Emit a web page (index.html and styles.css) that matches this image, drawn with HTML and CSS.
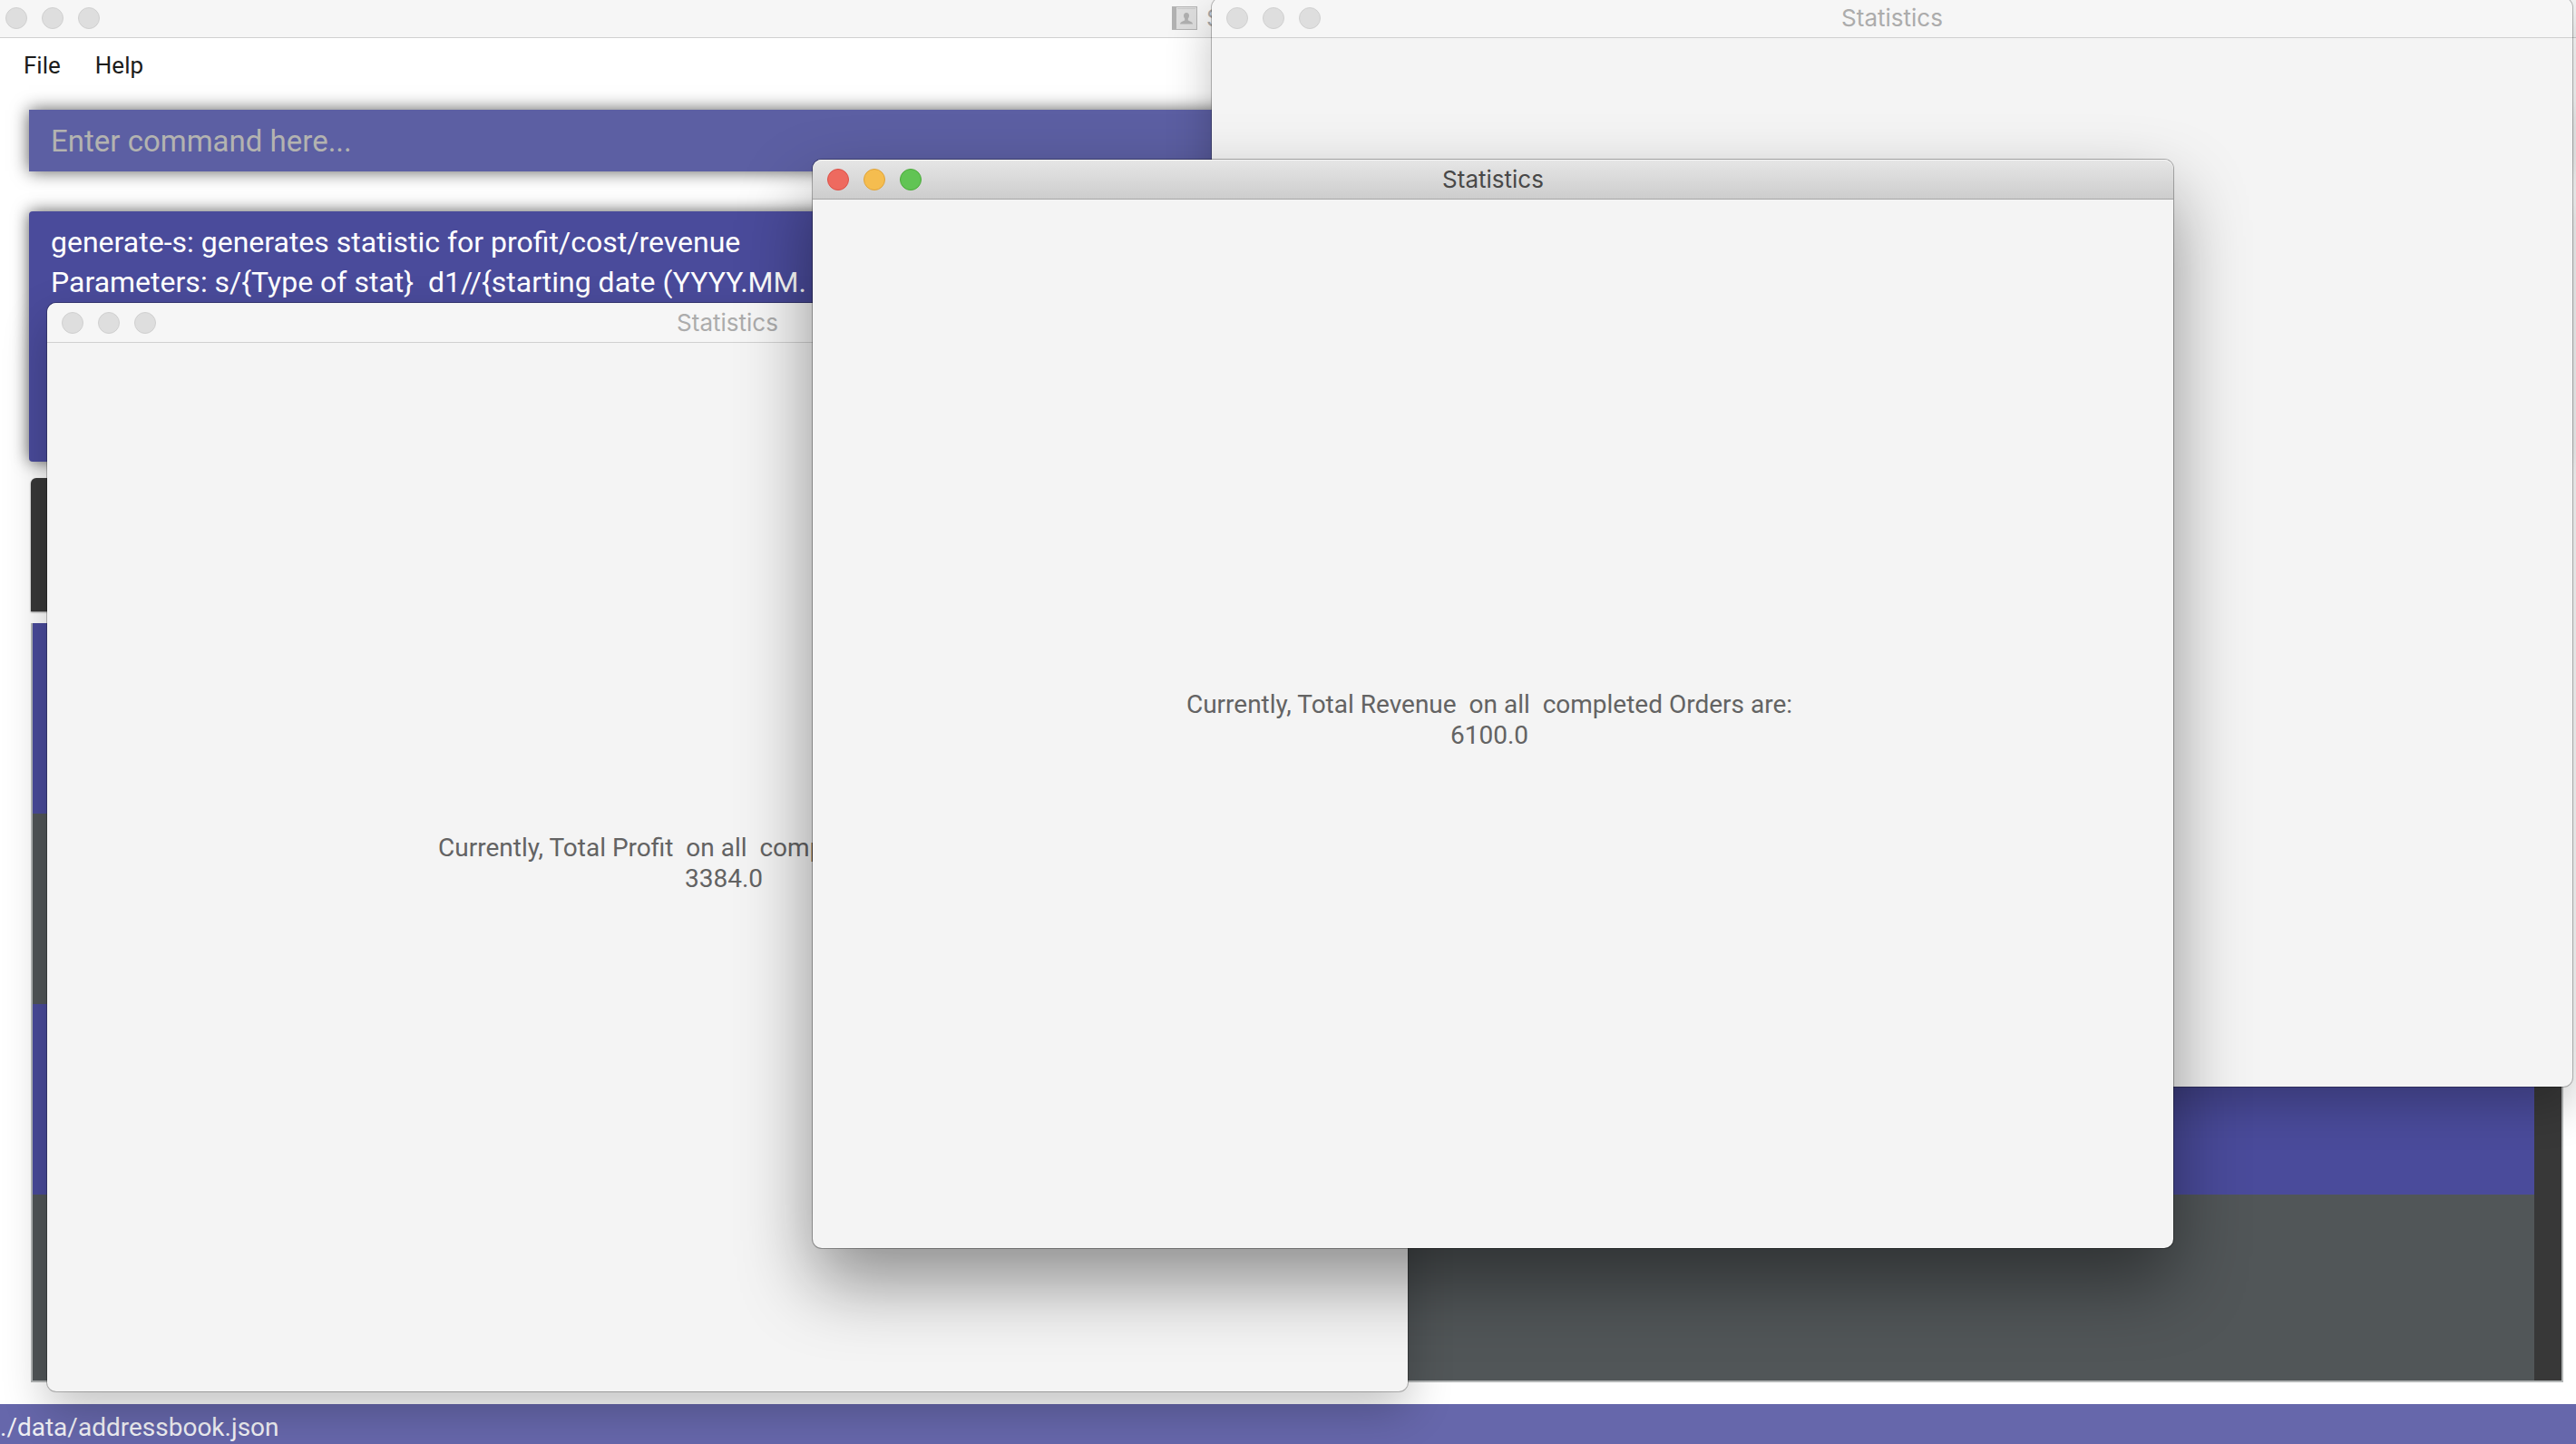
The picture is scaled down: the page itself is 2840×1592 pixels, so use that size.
FILE: index.html
```html
<!DOCTYPE html>
<html lang="en">
<head>
<meta charset="utf-8">
<title>Statistics</title>
<link rel="stylesheet" href="styles.css">
</head>
<body>
<div class="desktop">
  <main class="app">
    <header class="app-bar">
      <div class="lights">
        <button class="light" aria-label="Close"></button>
        <button class="light" aria-label="Minimise"></button>
        <button class="light" aria-label="Zoom"></button>
      </div>
      <div class="app-title">
        <svg class="app-icon" viewBox="0 0 28 26" aria-hidden="true">
          <rect x="0.500" y="0.500" width="27" height="25" fill="#dedede" stroke="#b4b4b4"/>
          <rect x="0" y="1" width="5" height="24" fill="#b2b2b2"/>
          <path d="M6 2.500H26" stroke="#cacaca"/>
          <path d="M16 7c-2 0-3 1.400-3 3.200 0 1.500.6 2.500 1.200 3.200v1.800c-.6 1-5 1.300-5.200 4.300h14c-.2-3-4.600-3.300-5.200-4.300v-1.800c.6-.7 1.200-1.700 1.200-3.200C19 8.400 18 7 16 7z" fill="#b0b0b0"/>
        </svg>
        <span>S</span>
      </div>
    </header>
    <nav class="menu">
      <button class="menu-item">File</button>
      <button class="menu-item">Help</button>
    </nav>
    <input class="command" type="text" placeholder="Enter command here..." aria-label="Command">
    <section class="result">
      <p>generate-s: generates statistic for profit/cost/revenue</p>
      <p>Parameters: s/{Type of stat}  d1//{starting date (YYYY.MM.</p>
    </section>
    <section class="pane"></section>
    <section class="list">
      <div class="rows">
        <div class="row"></div>
        <div class="row"></div>
        <div class="row"></div>
        <div class="row"></div>
      </div>
      <div class="scroll"></div>
    </section>
    <footer class="status">./data/addressbook.json</footer>
  </main>

  <section class="window window-cost">
    <header class="window-bar">
      <div class="lights">
        <button class="light" aria-label="Close"></button>
        <button class="light" aria-label="Minimise"></button>
        <button class="light" aria-label="Zoom"></button>
      </div>
      <h2 class="window-title">Statistics</h2>
    </header>
    <div class="window-body"></div>
  </section>

  <section class="window window-profit">
    <header class="window-bar">
      <div class="lights">
        <button class="light" aria-label="Close"></button>
        <button class="light" aria-label="Minimise"></button>
        <button class="light" aria-label="Zoom"></button>
      </div>
      <h2 class="window-title">Statistics</h2>
    </header>
    <div class="window-body">
      <p>Currently, Total Profit  on all  completed Orders are:</p>
      <p>3384.0</p>
    </div>
  </section>

  <section class="window window-revenue active">
    <header class="window-bar">
      <div class="lights">
        <button class="light close" aria-label="Close"></button>
        <button class="light minimise" aria-label="Minimise"></button>
        <button class="light zoom" aria-label="Zoom"></button>
      </div>
      <h2 class="window-title">Statistics</h2>
    </header>
    <div class="window-body">
      <p>Currently, Total Revenue  on all  completed Orders are:</p>
      <p>6100.0</p>
    </div>
  </section>
</div>
</body>
</html>
```
FILE: styles.css
```css
* {
  box-sizing: border-box;
}

body {
  margin: 0;
  font-family: Roboto, "Liberation Sans", sans-serif;
  background: #fff;
}

p,
h2 {
  margin: 0;
  font-weight: 400;
  white-space: pre;
}

button,
input {
  border: 0;
  padding: 0;
  font: inherit;
}

.desktop {
  position: relative;
  height: 100vh;
  overflow: hidden;
}

/* Main application window */
.app {
  display: flex;
  flex-direction: column;
  height: 100%;
}

.app-bar {
  display: grid;
  grid-template-columns: 1fr auto 1fr;
  align-items: center;
  height: 42px;
  padding: 0 6px 1px;
  background: #f6f6f6;
  border-bottom: 1px solid #d0d0d0;
}

.app-title {
  display: flex;
  align-items: center;
  gap: 10px;
  width: 256px;
  font-family: Inter, sans-serif;
  font-size: 26px;
  line-height: 32px;
  color: #a8a8a8;
}

.app-icon {
  width: 28px;
  height: 26px;
}

.lights {
  display: flex;
  gap: 16px;
}

.light {
  width: 24px;
  height: 24px;
  border: 1px solid #d0d0d0;
  border-radius: 50%;
  background: #dedede;
}

.menu {
  display: flex;
  gap: 38px;
  padding: 14px 26px 33px;
}

.menu-item {
  background: none;
  color: #1c1c1c;
  font-size: 26px;
  line-height: 32px;
}

.command {
  flex: none;
  height: 68px;
  margin: 0 16px 44px 32px;
  padding: 0 24px;
  background: #5c5fa3;
  box-shadow: 0 0 18px rgba(0, 0, 0, 0.65);
  color: #fff;
  font-size: 33px;
}

.command::placeholder {
  color: #b3b3b0;
  opacity: 1;
}

.result {
  flex: none;
  height: 276px;
  margin: 0 16px 18px 32px;
  padding: 12px 24px;
  border-radius: 4px;
  background: #4a4b9b;
  box-shadow: 0 0 18px rgba(0, 0, 0, 0.65);
  color: #fff;
  font-size: 32px;
  line-height: 44px;
}

.pane {
  flex: none;
  height: 147px;
  margin: 0 14px 13px 34px;
  border-radius: 6px 6px 0 0;
  background: #383838;
  box-shadow: 0 1px 2px rgba(0, 0, 0, 0.5);
}

.list {
  display: flex;
  flex: 1;
  min-height: 0;
  margin: 0 14px 24px 34px;
  border: 2px solid #b3b6b6;
  border-top: 0;
  background: #383838;
}

.rows {
  flex: 1;
  overflow: hidden;
}

.row {
  height: 210px;
  background: #4a4b9b;
}

.row:nth-child(even) {
  background: #515658;
}

.scroll {
  width: 30px;
}

.status {
  flex: none;
  height: 44px;
  padding-top: 4px;
  background: #6667ab;
  color: #f0f0f4;
  font-size: 28px;
  line-height: 44px;
}

/* Floating statistics windows */
.window {
  position: absolute;
  display: flex;
  flex-direction: column;
  width: 1500px;
  height: 1200px;
  border-radius: 10px;
  background: #f4f4f4;
  box-shadow: 0 0 0 1px rgba(0, 0, 0, 0.25), 0 20px 50px rgba(0, 0, 0, 0.24);
}

.window-cost {
  left: 1336px;
  top: -2px;
}

.window-profit {
  left: 52px;
  top: 334px;
}

.window-revenue {
  left: 896px;
  top: 176px;
}

.window-bar {
  display: grid;
  grid-template-columns: 1fr auto 1fr;
  align-items: center;
  height: 44px;
  padding: 1px 16px 0;
  border-bottom: 1px solid #d0d0d0;
  border-radius: 10px 10px 0 0;
  background: #f6f6f6;
}

.window-title {
  color: #acacac;
  font-family: Inter, sans-serif;
  font-size: 26px;
  line-height: 32px;
}

.window-body {
  display: flex;
  flex: 1;
  flex-direction: column;
  align-items: center;
  justify-content: center;
  padding: 0 8px 8px 0;
  color: #636363;
  font-size: 28px;
  line-height: 34px;
}

.active {
  box-shadow: 0 0 0 1px rgba(0, 0, 0, 0.3), 0 38px 80px rgba(0, 0, 0, 0.42);
}

.active .window-bar {
  border-bottom-color: #a6a6a6;
  background: linear-gradient(#e6e6e6, #cdcdcd);
  box-shadow: inset 0 1px #f4f4f4;
}

.active .window-title {
  color: #484848;
}

.close {
  border-color: #dc5148;
  background: #ee6a5f;
}

.minimise {
  border-color: #dfa33a;
  background: #f5bd4f;
}

.zoom {
  border-color: #4cab3b;
  background: #61c454;
}
```
